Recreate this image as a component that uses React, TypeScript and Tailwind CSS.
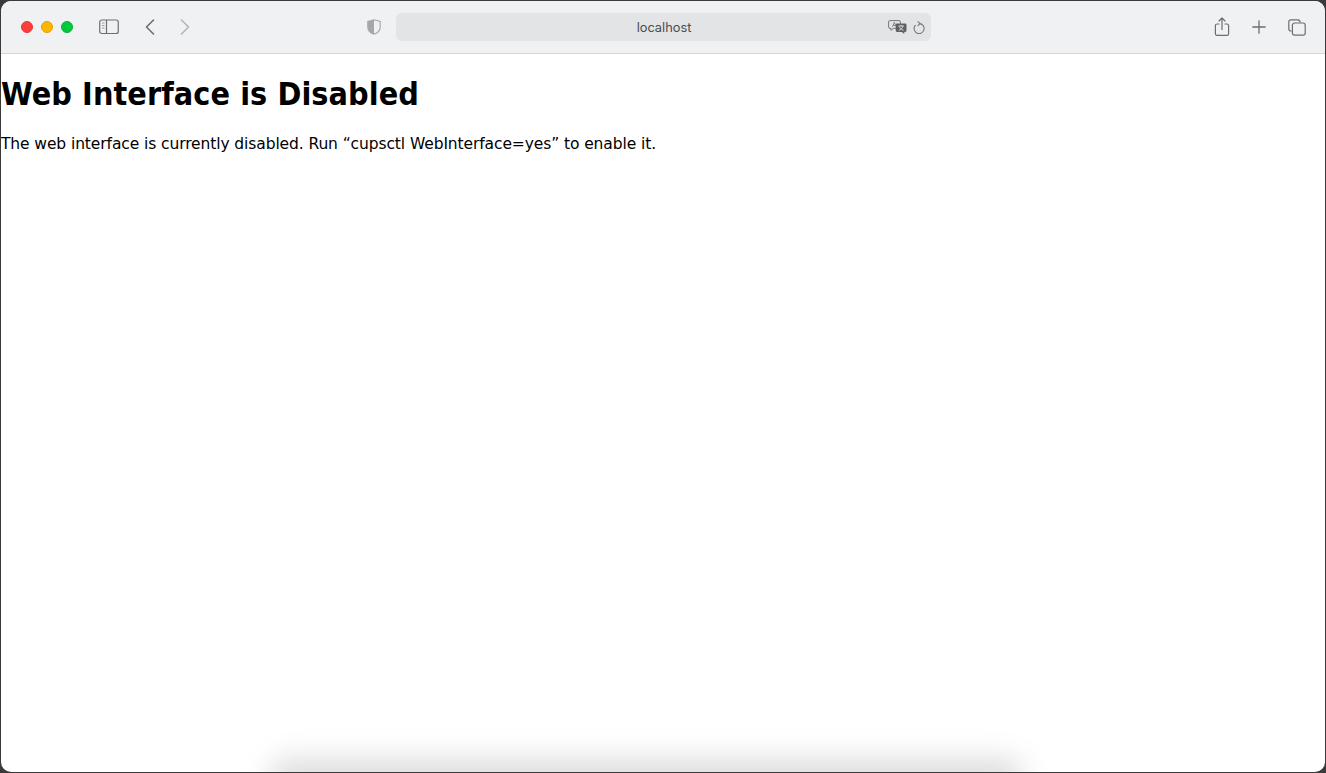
const iconClass = 'block shrink-0';

function TrafficLights() {
  return (
    <div className="flex items-center gap-2 ml-5">
      <span className="w-3 h-3 rounded-full bg-[#fe3d3f] border border-[#e5383a]" />
      <span className="w-3 h-3 rounded-full bg-[#fdb500] border border-[#e3a200]" />
      <span className="w-3 h-3 rounded-full bg-[#00c93f] border border-[#00b438]" />
    </div>
  );
}

function SidebarIcon() {
  return (
    <svg width="20" height="16" viewBox="0 0 20 16" fill="none" stroke="#6d6e71" className={iconClass}>
      <rect x="0.75" y="1" width="18.5" height="13.5" rx="2" strokeWidth="1.2" />
      <path d="M7.5 1v13.5" strokeWidth="1.2" />
      <path d="M3 4h2.5M3 6.5h2.5M3 9h2.5" strokeWidth="1.1" stroke="#9a9b9e" />
    </svg>
  );
}

function Chevron({ dir, color }: { dir: 'left' | 'right'; color: string }) {
  return (
    <svg width="10" height="16" viewBox="0 0 10 16" fill="none" stroke={color} strokeWidth="1.6" strokeLinecap="round" strokeLinejoin="round" className={iconClass}>
      <path d={dir === 'left' ? 'M8.5 1 1.5 8l7 7' : 'M1.5 1l7 7-7 7'} />
    </svg>
  );
}

function ShieldIcon() {
  return (
    <svg width="14" height="16" viewBox="0 0 14 16" className={iconClass}>
      <path d="M7 .8 13.2 2.4V8c0 3.6-2.6 6-6.2 7.3C3.4 14 .8 11.6.8 8V2.4Z" fill="#f0f1f3" stroke="#a6a7aa" strokeWidth="1.1" />
      <path d="M7 .8V15.3C3.4 14 .8 11.6.8 8V2.4Z" fill="#a6a7aa" />
    </svg>
  );
}

function TranslateIcon() {
  return (
    <svg width="19" height="15" viewBox="0 0 19 15" className={iconClass}>
      <path d="M2 .6h9a1.4 1.4 0 0 1 1.4 1.4v5a1.4 1.4 0 0 1-1.4 1.4H5.2L3 10.4V8.4H2A1.4 1.4 0 0 1 .6 7V2A1.4 1.4 0 0 1 2 .6Z" fill="none" stroke="#77787b" strokeWidth="1" />
      <path d="M4.4 6.8 6.4 2.4l2 4.4M5.2 5.4h2.4" fill="none" stroke="#77787b" strokeWidth="0.9" />
      <path d="M9 3.6h8.2A1.3 1.3 0 0 1 18.5 5v5.6a1.3 1.3 0 0 1-1.3 1.3h-.9v2.2l-2.4-2.2H9a1.3 1.3 0 0 1-1.3-1.3V5A1.3 1.3 0 0 1 9 3.6Z" fill="#5f6063" />
      <path d="M10.4 6h5.4M13.1 4.9V6M15 6c-.5 2-2 3.6-4.2 4.4M11.4 6.6c.6 1.6 2 3 4.2 3.7" fill="none" stroke="#e3e4e6" strokeWidth="0.9" />
    </svg>
  );
}

function ReloadIcon() {
  return (
    <svg width="12" height="14" viewBox="0 0 12 14" fill="none" stroke="#77787b" strokeWidth="1.1" strokeLinecap="round" strokeLinejoin="round" className={iconClass}>
      <path d="M6.9 2.6A5 5 0 1 1 2.2 4.4" />
      <path d="M5 .6 7 2.6 5 4.6" />
    </svg>
  );
}

function ShareIcon() {
  return (
    <svg width="16" height="20" viewBox="0 0 16 20" fill="none" stroke="#6d6e71" strokeWidth="1.2" strokeLinecap="round" strokeLinejoin="round" className={iconClass}>
      <path d="M5 7H3A1.6 1.6 0 0 0 1.4 8.6v8.2A1.6 1.6 0 0 0 3 18.4h10a1.6 1.6 0 0 0 1.6-1.6V8.6A1.6 1.6 0 0 0 13 7h-2" />
      <path d="M8 12.6V1.2M5 4l3-3 3 3" />
    </svg>
  );
}

function PlusIcon() {
  return (
    <svg width="14" height="14" viewBox="0 0 14 14" fill="none" stroke="#6d6e71" strokeWidth="1.3" strokeLinecap="round" className={iconClass}>
      <path d="M7 .8v12.4M.8 7h12.4" />
    </svg>
  );
}

function TabsIcon() {
  return (
    <svg width="18" height="17" viewBox="0 0 18 17" fill="none" stroke="#6d6e71" strokeWidth="1.2" className={iconClass}>
      <path d="M3.6 12H3a2.2 2.2 0 0 1-2.2-2.2V3A2.2 2.2 0 0 1 3 .8h6.8A2.2 2.2 0 0 1 12 3v.6" />
      <rect x="4.4" y="4" width="12.8" height="12.2" rx="2.2" />
    </svg>
  );
}

function Toolbar() {
  return (
    <div className="flex items-center h-[52px] shrink-0 bg-[#f0f1f3]">
      <TrafficLights />
      <div className="ml-[26px]"><SidebarIcon /></div>
      <div className="ml-[26px]"><Chevron dir="left" color="#6d6e71" /></div>
      <div className="ml-[25px]"><Chevron dir="right" color="#b4b5b8" /></div>
      <div className="ml-[177px]"><ShieldIcon /></div>
      <div className="relative ml-[15px] flex items-center justify-center w-[535px] h-7 pt-px pl-px rounded-md bg-[#e3e4e6] text-[12.8px] text-[#4c4c4e] font-['Inter',sans-serif]">
        localhost
        <div className="absolute right-[6px] top-[7px] flex items-center gap-[6px]">
          <TranslateIcon />
          <ReloadIcon />
        </div>
      </div>
      <div className="ml-[283px]"><ShareIcon /></div>
      <div className="ml-[22px]"><PlusIcon /></div>
      <div className="ml-[22px]"><TabsIcon /></div>
    </div>
  );
}

export default function App() {
  return (
    <div className="h-[773px] w-[1326px] overflow-hidden bg-[#3a3a3a] p-px">
      <div className="relative flex h-[771px] flex-col overflow-hidden rounded-[10px] bg-white">
        <Toolbar />
        <div className="border-t border-[#d5d6d8] text-black font-['DejaVu_Sans',sans-serif]">
          <h1 className="mt-[21px] text-[32px] leading-[38px] tracking-[0.08px] font-bold font-['DejaVu_Sans_Condensed','DejaVu_Sans',sans-serif]">Web Interface is Disabled</h1>
          <p className="mt-[22px] text-[15.5px] leading-[19px] tracking-[-0.1px]">
            The web interface is currently disabled. Run “cupsctl WebInterface=yes” to enable it.
          </p>
        </div>
        {/* dock shadow bleeding up from below the window */}
        <div className="absolute bottom-[-26px] left-[268px] w-[754px] h-[40px] rounded-full bg-black/[0.13] blur-[14px]" />
      </div>
    </div>
  );
}
